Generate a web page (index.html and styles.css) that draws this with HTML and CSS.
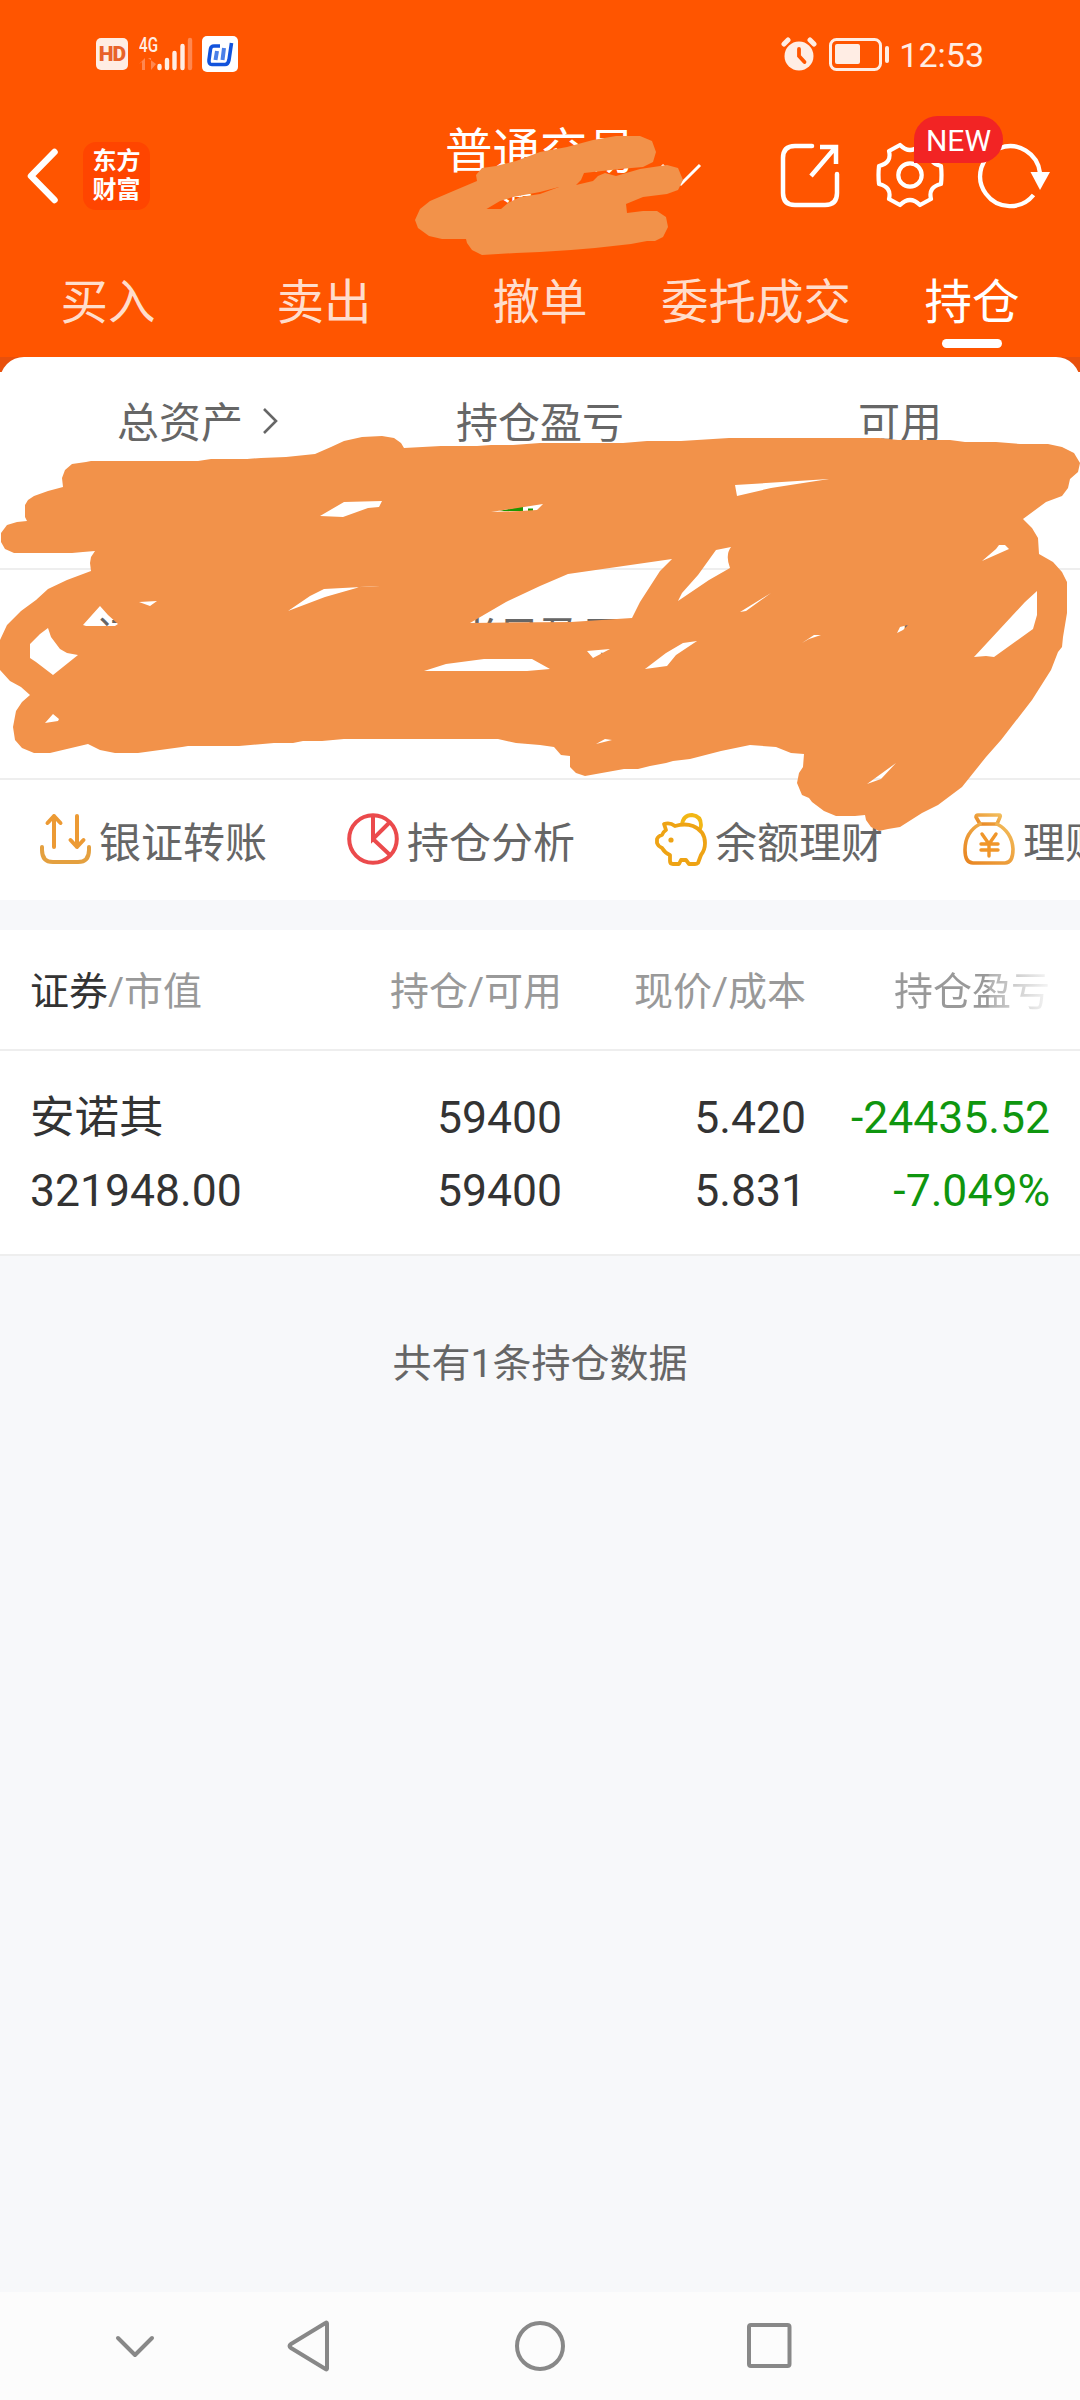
FILE: index.html
```html
<!DOCTYPE html>
<html lang="zh-CN">
  <head>
    <meta charset="utf-8" />
    <title>普通交易</title>
    <link rel="stylesheet" href="styles.css">
  </head>
  <body>
    <div class="header">
      <div class="status">
        <div class="status-left">
          <span class="hd">HD</span>
          <svg class="signal" width="56" height="44" viewBox="0 -4 56 44">
            <text x="0" y="16" font-size="20" textLength="19" lengthAdjust="spacingAndGlyphs" font-weight="500" fill="#ffede4">4G</text>
            <path d="M0 28l6-6v12H3V26M9 22h3v12l5-6" fill="#ff8750" />
            <g stroke-width="4.4" stroke-linecap="round" stroke="#ffede4">
              <path d="M20.500 30v2M28 24v8M35.500 17v15M43.500 10v22" />
              <path d="M51 4v28" stroke="#ff8750" />
            </g>
          </svg>
          <svg class="app-badge" width="36" height="36" viewBox="0 0 36 36">
            <rect width="36" height="36" rx="5" fill="#fff" />
            <path d="M18 10H12Q9 10 8.500 13L7 24Q6.500 28.500 10 28.500H23Q26 28.500 27 24L29.500 7" fill="none" stroke="#1253dc" stroke-width="3.600" />
            <path d="M15 15l-1.500 9M22 12l-1.500 12" stroke="#4b80e8" stroke-width="4" />
          </svg>
        </div>
        <div class="status-right">
          <svg width="36" height="36" viewBox="0 0 36 36">
            <circle cx="18" cy="20" r="14.500" fill="#ffede4" />
            <path d="M3 8l4-4M33 8l-4-4" stroke="#ffede4" stroke-width="5" stroke-linecap="round" />
            <path d="M18 13v7l5.500 6" fill="none" stroke="#ff5500" stroke-width="3.800" stroke-linecap="round" />
          </svg>
          <svg class="battery" width="62" height="36" viewBox="0 0 62 36">
            <rect x="2.500" y="3.500" width="50" height="30" rx="6" fill="none" stroke="#ffede4" stroke-width="3" />
            <rect x="7" y="8" width="25" height="20" rx="2" fill="#ffede4" />
            <rect x="57" y="10" width="4" height="17" rx="2" fill="#ffede4" />
          </svg>
          <span class="time">12:53</span>
        </div>
      </div>

      <div class="titlebar">
        <div class="titlebar-left">
          <svg width="34" height="60" viewBox="0 0 34 60">
            <path d="M28.500 6L5 30l23.500 24" fill="none" stroke="#fff" stroke-width="6.500" stroke-linecap="round" stroke-linejoin="round" />
          </svg>
          <div class="logo">东方<br>财富</div>
        </div>
        <div class="title">
          <h1>普通交易</h1>
          <p>游</p>
        </div>
        <div class="tools">
          <svg class="caret" width="46" height="26" viewBox="0 0 46 26">
            <path d="M4 3l19 19L42 3" fill="none" stroke="#fff" stroke-width="3" />
          </svg>
          <svg class="share" width="64" height="68" viewBox="0 0 64 68">
            <g fill="none" stroke="#fff" stroke-width="4.500">
              <path d="M34 5H17Q5 5 5 17V52Q5 64 17 64H47Q59 64 59 52V33" stroke-linecap="round" />
              <path d="M42 6H58V23M57 7L33 35" />
            </g>
          </svg>
          <div class="gear">
            <svg width="68" height="68" viewBox="-34 -34 68 68">
              <g fill="none" stroke="#fff" stroke-width="4.200" stroke-linejoin="round">
                <path d="M-10-30Q0-20 10-30L21-24Q18-12 31-9Q32 0 31 9Q18 12 21 24L10 30Q0 20-10 30L-21 24Q-18 12-31 9Q-32 0-31-9Q-18-12-21-24Z" />
                <circle r="11.700" />
              </g>
            </svg>
            <span class="new">NEW</span>
          </div>
          <svg class="refresh" width="76" height="68" viewBox="0 0 76 68">
            <path d="M57.500 54A30 30 0 1 1 64 32" fill="none" stroke="#fff" stroke-width="4.300" />
            <path d="M54.500 31H74L64 49Z" fill="#fff" />
          </svg>
        </div>
      </div>

      <div class="tabs">
        <span>买入</span>
        <span>卖出</span>
        <span>撤单</span>
        <span>委托成交</span>
        <span class="active">持仓</span>
      </div>
    </div>

    <div class="summary-wrap">
      <div class="summary">
        <div class="cell">
          <span>总资产</span>
          <svg class="more" width="18" height="30" viewBox="0 0 18 30">
            <path d="M3 3l12 12L3 27" fill="none" stroke="#666" stroke-width="2.600" />
          </svg>
        </div>
        <div class="cell">持仓盈亏</div>
        <div class="cell">可用</div>
        <div class="cell second">证券市值</div>
        <div class="cell second">当日盈亏</div>
        <div class="cell second">可取</div>
      </div>
    </div>

    <div class="actions">
      <div class="action">
        <svg width="52" height="54" viewBox="0 0 52 54">
          <g fill="none" stroke="#e4a03f" stroke-width="4" stroke-linecap="round" stroke-linejoin="round">
            <path d="M3 35v3q0 12 11 12h25q11 0 11-12v-3" />
            <path d="M15 35V4M8.500 11L15 4l6.500 7M38 4v31M31.500 28l6.500 7 6.500-7" stroke="#ec9a34" />
          </g>
        </svg>
        <span>银证转账</span>
      </div>
      <div class="action">
        <svg width="52" height="54" viewBox="0 0 52 54">
          <g fill="none" stroke="#eb4a4c" stroke-width="4">
            <circle cx="26" cy="27" r="23.800" />
            <path d="M26 3v24l17-17M26 27l17 16" />
          </g>
        </svg>
        <span>持仓分析</span>
      </div>
      <div class="action">
        <svg width="52" height="54" viewBox="0 0 52 54">
          <g fill="none" stroke="#eea314" stroke-width="3.800" stroke-linejoin="round">
            <path d="M27 13Q28 3 37 3Q46 4 46 13Q46 15 45 17" stroke="#f2b715" />
            <path d="M9 12Q15 10 20 14Q30 11 38 14Q50 19 50 31Q50 38 46 43L43 51Q42 52 40 52H34L31 48H26L24 52H18Q15 52 15 49V43Q10 41 7 36Q3 34 2 31V27Q3 24 7 23Q8 20 11 18Z" />
          </g>
          <circle cx="16" cy="28" r="2.600" fill="#eea314" />
        </svg>
        <span>余额理财</span>
      </div>
      <div class="action">
        <svg width="52" height="54" viewBox="0 0 52 54">
          <defs>
            <linearGradient id="bag" x1="0" y1="1" x2="1" y2="0">
              <stop offset="0" stop-color="#e88420" />
              <stop offset="1" stop-color="#f2bd5c" />
            </linearGradient>
          </defs>
          <g fill="none" stroke="url(#bag)" stroke-width="3.600" stroke-linejoin="round" stroke-linecap="round">
            <path d="M15 3H36Q38 3 37 5L34 12H17L13 5Q13 3 15 3Z" />
            <path d="M17 12Q2 20 2 38Q2 51 10 51H42Q50 51 50 37Q49 20 34 12" />
          </g>
          <path d="M19 22l7 10 7-10M18 32h17M18 38h17M26 32v12" fill="none" stroke="#f0962a" stroke-width="3.400" stroke-linecap="round" />
        </svg>
        <span>理财</span>
      </div>
    </div>

    <div class="holdings">
      <div class="row head">
        <span><b>证券</b>/市值</span>
        <span>持仓/可用</span>
        <span>现价/成本</span>
        <span>持仓盈亏</span>
      </div>
      <div class="row item">
        <span>安诺其<br>321948.00</span>
        <span>59400<br>59400</span>
        <span>5.420<br>5.831</span>
        <span class="down">-24435.52<br>-7.049%</span>
      </div>
    </div>
    <p class="total">共有1条持仓数据</p>

    <div class="navbar">
      <svg width="1080" height="108" viewBox="0 0 1080 108">
        <g fill="none" stroke="#888" stroke-width="4" stroke-linejoin="round" stroke-linecap="round">
          <path d="M118 46l17 17 17-17" />
          <path d="M327 31.500v45Q327 78 325.500 77L291 56Q288 54 291 52L325.500 31Q327 30 327 31.500Z" />
          <circle cx="540" cy="54" r="23" />
          <rect x="749" y="33" width="40.500" height="41" rx="2" />
        </g>
      </svg>
    </div>

    <!-- marker strokes hiding the account name and the amounts -->
    <svg class="marker" width="1080" height="900" viewBox="0 0 1080 900">
      <path d="M499 511L523 506V511ZM528 508.500H533V511H528Z" fill="#1e9600" />
      <g fill="#f2924a" fill-rule="evenodd">
        <path d="M477 181L476 175L482 168L496 166L516 161L540 152L567 147L593 140L616 136H640L652 141L656 152L653 162L643 167L620 169L584 173L581 180L576 185L593 181L598 176L605 173L616 176L640 169L667 165L678 168L683 180L678 190L667 194L643 197L626 204L627 213L643 211H657L666 217L668 227L663 237L655 241H647L631 244L595 248L571 250L540 252L516 253L482 255L472 250L467 243L466 239H442L429 236L418 228L415 220L420 209L430 201L451 192Z
          M486.500 209L500 201L513 197L540 192L559 187L540 194L520 197L508 203L501 209Z" />
        <path d="M63 487L62 478L65 470L72 464L86 462L91 461H198L211 459H247L261 458L286 457L315 454L331 447L344 441L362 437L382 436L394 438L401 443L404 448L441 446H477L491 445H513L540 443H623L647 441H681L729 438H879L898 440H950L965 442H996L1020 444H1048L1062 447L1074 453L1080 463L1078 472L1070 479L1068 488L1062 496L1046 502L1023 519L1032 528L1038 538L1039 554L1053 562L1062 572L1067 582V613L1063 637L1062 647L1058 652L1051 670L1032 700L1001 740L986 757L962 787L938 805L922 813L900 827L888 829L879 831L871 827L866 820L865 815L855 816H836L824 811L812 802L809 798L802 795L797 783L799 773L803 767L804 754L791 753L776 747L750 745L721 751L690 759L673 761L666 763L650 766L638 769H624L585 776L576 773L570 767V756L561 755L554 747L540 745L516 743L498 739H344L322 741H303L293 743H274L239 746H188L182 747L138 753H115L100 750L88 744L50 753H34L22 748L15 740L13 727L16 711L22 702L30 695L21 687L10 681L0 670V640L7 625L21 611L36 600L48 589L67 580L91 571L90 563L91 557L95 551L83 552L72 553H14L5 549L1 542V533L7 525L17 522L27 521L25 517V505L28 500L34 496L48 491Z
          M320 516L344 502L382 501L379 507L368 508L343 517Z
          M491 512L543 504L537 510L520 511Z
          M735 485L829 479L771 488L737 496Z
          M83 625L100 606L108 615L118 624L115 626H86Z
          M139 602L157 601L150 606Z
          M288 611L310 596L324 589L380 586L360 587L325 597Z
          M30 644L40 634L48 628L51 637L60 649L67 653L78 655L53 675L36 662L30 658Z
          M45 723L53 714L59 719L58 721Z
          M470 623L506 602L540 586L568 574L672 559L660 571L640 602L632 618L571 622Z
          M424 671L446 664L484 659H532L550 669L527 671Z
          M587 651L610 649L593 658Z
          M645 669L666 653L683 643L697 641L676 655L667 666Z
          M678 601L682 593L698 575L716 550L731 547Q725 555 730 568L709 580Z
          M740 612L771 593L746 611Z
          M982 561L996 549L999 545H1005L1009 549L1000 553Z
          M802 643L814 635H821L809 639Z
          M897 633L900 627L908 625L903 630Z
          M974 657L1025 602L1037 591V615L1033 629L994 657L986 656Z
          M596 744L605 739L612 740Z
          M867 784L896 763L881 779Z" />
      </g>
    </svg>
  </body>
</html>
```
FILE: styles.css
```css
* {
  box-sizing: border-box;
}
body {
  margin: 0;
  width: 1080px;
  height: 2400px;
  display: flex;
  flex-direction: column;
  position: relative;
  overflow: hidden;
  font-family: Roboto, "Noto Sans CJK SC", sans-serif;
  color: #333;
  background-color: #f7f8fa;
}
h1, p {
  margin: 0;
  font-weight: normal;
}
svg {
  display: block;
  flex: none;
}

.header {
  height: 357px;
  color: #fff;
  background-color: #ff5500;
}
.status {
  height: 108px;
  padding: 0 96px;
  display: flex;
  align-items: center;
  justify-content: space-between;
}
.status-left, .status-right {
  display: flex;
  align-items: center;
}
.hd {
  width: 32px;
  height: 32px;
  border-radius: 5px;
  background-color: #ffede4;
  color: #e8622a;
  font-size: 21px;
  font-weight: 900;
  line-height: 33px;
  text-align: center;
  letter-spacing: -1px;
}
.signal {
  margin-left: 11px;
}
.app-badge {
  margin-left: 7px;
}
.battery {
  margin-left: 11px;
}
.time {
  margin-left: 9px;
  font-size: 34px;
  line-height: 36px;
  color: #ffede4;
  padding-top: 2px;
}

.titlebar {
  height: 140px;
  padding: 0 28px 0 26px;
  display: grid;
  grid-template-columns: 414px 200px 1fr;
}
.titlebar-left {
  display: flex;
  align-items: center;
  padding-bottom: 5px;
  gap: 23px;
}
.logo {
  width: 67px;
  height: 68px;
  padding: 5px 0 0;
  border-radius: 13px;
  background-color: #ff4500;
  font-size: 24px;
  font-weight: bold;
  line-height: 29px;
  text-align: center;
}
.title {
  text-align: center;
}
.title h1 {
  font-size: 47.5px;
  line-height: 60px;
  padding-top: 14px;
}
.title p {
  font-size: 30px;
  line-height: 36px;
  padding: 5px 46px 0 0;
}
.tools {
  display: flex;
  align-items: center;
  padding-bottom: 6px;
  justify-content: flex-end;
}
.share {
  margin-left: 74px;
}
.gear {
  margin-left: 34px;
  position: relative;
}
.new {
  position: absolute;
  left: 38px;
  top: -25px;
  width: 89px;
  height: 47px;
  border-radius: 24px 24px 24px 0;
  background-color: #f22424;
  font-size: 30px;
  line-height: 49px;
  text-align: center;
  z-index: 1;
}
.refresh {
  margin-left: 32px;
}

.tabs {
  display: grid;
  grid-template-columns: repeat(5, 1fr);
  height: 109px;
  font-size: 47.5px;
  line-height: 110px;
  text-align: center;
  color: #ffddcc;
}
.tabs span {
  height: 109px;
  white-space: nowrap;
}
.tabs .active {
  color: #fff;
  position: relative;
}
.tabs .active::after {
  content: "";
  position: absolute;
  left: 78px;
  bottom: 9px;
  width: 60px;
  height: 9px;
  border-radius: 5px;
  background-color: #fff;
}

.summary-wrap {
  height: 423px;
  background: linear-gradient(#e8500c 15px, #fff 15px);
}
.summary {
  height: 423px;
  display: grid;
  grid-template-columns: repeat(3, 1fr);
  grid-template-rows: 213px 210px;
  border-radius: 24px 24px 0 0;
  background-color: #fff;
  font-size: 42px;
  line-height: 60px;
  color: #666;
}
.cell {
  display: flex;
  justify-content: center;
  padding-top: 37px;
  border-bottom: 2px solid #eee;
}
.cell.second {
  padding-top: 38px;
}
.more {
  margin: 12px -36px 0 18px;
}

.actions {
  height: 120px;
  display: flex;
  padding: 0 0 3px 39px;
  overflow: hidden;
  background-color: #fff;
  font-size: 42px;
  color: #666;
}
.action {
  flex: none;
  width: 308px;
  display: flex;
  align-items: center;
  gap: 8px;
  white-space: nowrap;
}
.action span {
  padding-top: 2px;
}

.holdings {
  margin-top: 30px;
  background-color: #fff;
}
.row {
  display: grid;
  grid-template-columns: 330px 202px 244px 244px;
  padding: 0 30px;
  border-bottom: 2px solid #eee;
  text-align: right;
  white-space: nowrap;
}
.row span:first-child {
  text-align: left;
}
.head {
  height: 121px;
  font-size: 39px;
  line-height: 125px;
  color: #999;
}
.head b {
  font-weight: normal;
  color: #333;
}
.head span:last-child {
  color: transparent;
  background: linear-gradient(90deg, #999 182px, #b0b0b0 184px, #f4f4f4 242px);
  -webkit-background-clip: text;
  background-clip: text;
}
.item {
  height: 205px;
  padding-top: 31px;
  font-size: 44.5px;
  line-height: 73px;
}
.down {
  color: #0f960f;
}
.total {
  padding-top: 80px;
  font-size: 39px;
  line-height: 56px;
  text-align: center;
  color: #666;
}

.navbar {
  height: 108px;
  margin-top: auto;
  background-color: #fcfcfc;
}
.marker {
  position: absolute;
  left: 0;
  top: 0;
}
```
